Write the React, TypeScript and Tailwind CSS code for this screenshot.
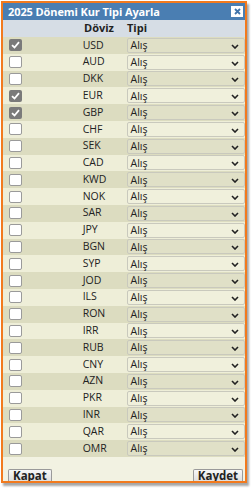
import React from "react";

const codes = ["USD","AUD","DKK","EUR","GBP","CHF","SEK","CAD","KWD","NOK","SAR","JPY","BGN","SYP","JOD","ILS","RON","IRR","RUB","CNY","AZN","PKR","INR","QAR","OMR"];
const checked = new Set(["USD","EUR","GBP"]);

function Chevron() {
  return (
    <svg width="8" height="5" viewBox="0 0 8 5" className="absolute right-[5px] top-[5px]">
      <path d="M1 1 L4 4 L7 1" fill="none" stroke="#222" strokeWidth="1.6" />
    </svg>
  );
}

function Check({ on }: { on: boolean }) {
  return on ? (
    <div className="w-[13px] h-[12px] rounded-[2px] bg-[#7a7a7a] flex items-center justify-center">
      <svg width="9" height="8" viewBox="0 0 9 8">
        <path d="M1 4.2 L3.5 6.5 L8 1.2" fill="none" stroke="#fff" strokeWidth="1.8" />
      </svg>
    </div>
  ) : (
    <div className="w-[13px] h-[12px] rounded-[2px] bg-white border border-[#9a9a9a]" />
  );
}

export default function App() {
  return (
    <div className="w-[251px] h-[489px] bg-white relative" style={{ fontFamily: '"Open Sans", "DejaVu Sans", sans-serif' }}>
      <div className="absolute left-[1px] top-[1px] w-[246px] h-[482px] border-2 border-[#f27a1e] overflow-hidden flex flex-col bg-[#f2f2e2] shadow-[2px_3px_2px_rgba(0,0,0,0.35)]">
        <div className="h-[17px] bg-[#4a7eb2] flex items-center justify-between pl-[5px] pr-[2px] shrink-0">
          <span className="text-white font-bold text-[11px] leading-none tracking-[-0.1px]">2025 Dönemi Kur Tipi Ayarla</span>
          <div className="w-[12px] h-[11px] bg-white flex items-center justify-center">
            <svg width="7" height="7" viewBox="0 0 7 7">
              <path d="M1 1 L6 6 M6 1 L1 6" stroke="#3f73aa" strokeWidth="1.8" />
            </svg>
          </div>
        </div>
        <div className="h-[17px] bg-[#d6dde5] flex items-center shrink-0 text-[11px] font-bold text-[#222]">
          <div className="w-[81px]" />
          <div className="w-[43px]">Döviz</div>
          <div>Tipi</div>
        </div>
        {codes.map((c, i) => (
          <div key={c} className={`h-[16.8px] flex items-center shrink-0 text-[10.5px] text-[#222] ${i % 2 === 0 ? "bg-[#dcdcc0]" : "bg-[#eeeed8]"}`}>
            <div className="w-[80px] pl-[6px] flex items-center">
              <Check on={checked.has(c)} />
            </div>
            <div className="w-[44px]">{c}</div>
            <div className="relative w-[119px] h-[15px] border border-[#c9c9bd] rounded-[2px] bg-[rgba(255,255,255,0.12)] flex items-center pl-[3px]">
              <span className="leading-none">Alış</span>
              <Chevron />
            </div>
          </div>
        ))}
        <div className="flex-1 flex items-start justify-between pl-[5px] pr-[2px] pt-[12px]">
          <button className="h-[13px] px-[4px] border border-b-0 border-[#9a9a9a] rounded-t-[2px] bg-gradient-to-b from-[#f8f8f8] to-[#dcdcdc] text-[11.5px] font-bold text-[#222] leading-[12px] flex items-start">Kapat</button>
          <button className="h-[13px] px-[4px] border border-b-0 border-[#9a9a9a] rounded-t-[2px] bg-gradient-to-b from-[#f8f8f8] to-[#dcdcdc] text-[11.5px] font-bold text-[#222] leading-[12px] flex items-start">Kaydet</button>
        </div>
      </div>
    </div>
  );
}
